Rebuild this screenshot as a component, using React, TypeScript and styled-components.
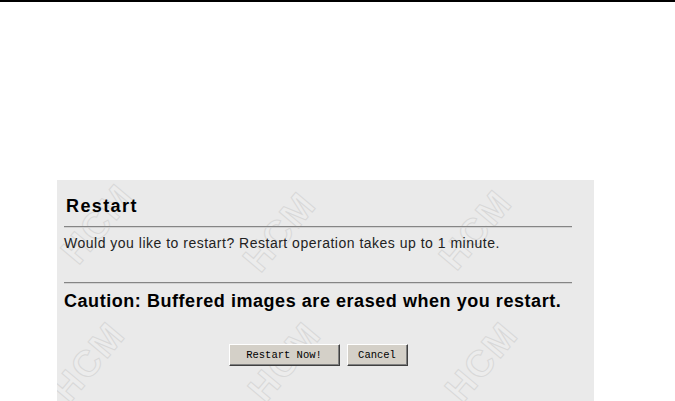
import React from 'react';
import styled, { createGlobalStyle } from 'styled-components';

const GlobalStyle = createGlobalStyle`
  html, body {
    margin: 0;
    padding: 0;
    background: #fff;
    font-family: "Liberation Sans", Arial, sans-serif;
  }
`;

const TopRule = styled.div`
  height: 2px;
  background: #000;
`;

const Main = styled.div`
  padding: 178px 0 0 57px;
`;

const Panel = styled.div`
  position: relative;
  box-sizing: border-box;
  width: 537px;
  height: 221px;
  padding: 16px 22px 0 7px;
  background: #eaeaea;
  overflow: hidden;
`;

const Content = styled.div`
  position: relative;
  z-index: 1;
`;

const Title = styled.h2`
  margin: 0;
  padding-left: 2px;
  font-size: 18px;
  line-height: 20px;
  letter-spacing: 1.4px;
  font-weight: bold;
  color: #000;
`;

const Rule = styled.div<{ $top: number }>`
  margin-top: ${(p) => p.$top}px;
  height: 1px;
  background: #858585;
  border-bottom: 1px solid #d2d2d2;
`;

const Message = styled.p`
  margin: 7px 0 0;
  font-size: 14px;
  line-height: 16px;
  letter-spacing: 0.5px;
  color: #222;
`;

const Caution = styled.p`
  margin: 7px 0 0;
  font-size: 18px;
  line-height: 20px;
  letter-spacing: 0.55px;
  font-weight: bold;
  color: #000;
`;

const ButtonRow = styled.div`
  margin-top: 33px;
  display: flex;
  justify-content: center;
  gap: 7px;
`;

const Button = styled.button<{ $width: number }>`
  box-sizing: border-box;
  width: ${(p) => p.$width}px;
  height: 22px;
  padding: 0;
  background: #d4d0c8;
  border: 1px solid;
  border-color: #fff #404040 #404040 #fff;
  box-shadow: inset -1px -1px 0 #808080;
  font-family: "Liberation Mono", "DejaVu Sans Mono", monospace;
  font-size: 10.5px;
  color: #000;
  cursor: pointer;
`;

const Watermark = styled.span`
  position: absolute;
  transform: translate(-50%, -50%) rotate(-50deg);
  font-family: "Liberation Sans", Arial, sans-serif;
  font-size: 37px;
  font-weight: bold;
  letter-spacing: 2px;
  color: #ececec;
  -webkit-text-stroke: 1px #d8d8d8;
  user-select: none;
  white-space: nowrap;
`;

const marks = [
  { x: 41, y: 44 },
  { x: 223, y: 52 },
  { x: 419, y: 50 },
  { x: 32, y: 182 },
  { x: 228, y: 182 },
  { x: 425, y: 182 },
];

export default function App() {
  return (
    <>
      <GlobalStyle />
      <TopRule />
      <Main>
        <Panel>
          {marks.map((m, i) => (
            <Watermark key={i} style={{ left: m.x, top: m.y }}>
              HCM
            </Watermark>
          ))}
          <Content>
            <Title>Restart</Title>
            <Rule $top={10} />
            <Message>
              Would you like to restart? Restart operation takes up to 1 minute.
            </Message>
            <Rule $top={31} />
            <Caution>Caution: Buffered images are erased when you restart.</Caution>
            <ButtonRow>
              <Button $width={111}>Restart Now!</Button>
              <Button $width={61}>Cancel</Button>
            </ButtonRow>
          </Content>
        </Panel>
      </Main>
    </>
  );
}
